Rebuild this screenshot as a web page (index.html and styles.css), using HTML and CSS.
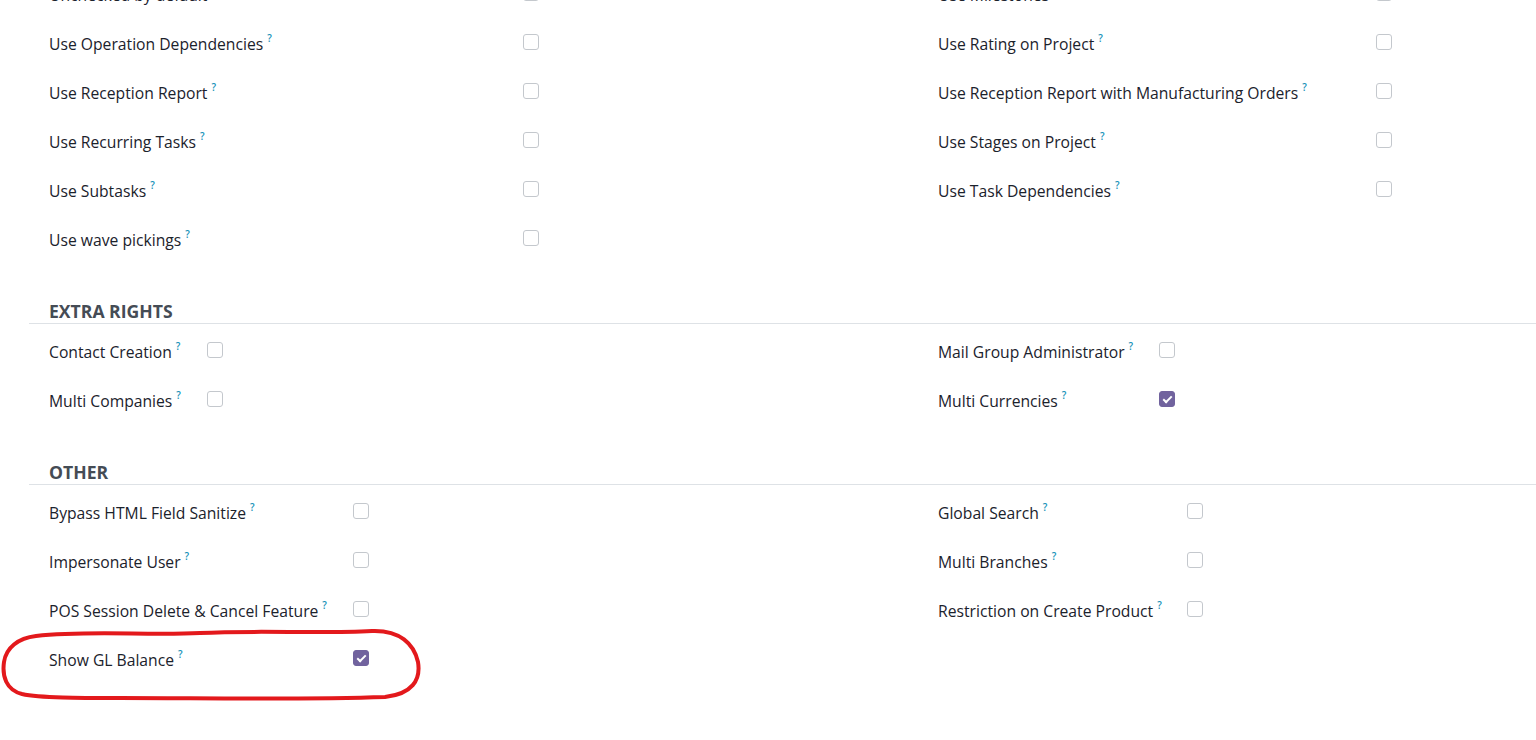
FILE: index.html
```html
<!DOCTYPE html>
<html>
<head>
<meta charset="utf-8">
<link rel="stylesheet" href="styles.css">
</head>
<body>
<div class="page">
  <div class="group-pair g1">
    <div class="col">
      <div class="row"><span class="lbl">Unchecked by default<sup>?</sup></span><span class="cb"></span></div>
      <div class="row"><span class="lbl">Use Operation Dependencies<sup>?</sup></span><span class="cb"></span></div>
      <div class="row"><span class="lbl">Use Reception Report<sup>?</sup></span><span class="cb"></span></div>
      <div class="row"><span class="lbl">Use Recurring Tasks<sup>?</sup></span><span class="cb"></span></div>
      <div class="row"><span class="lbl">Use Subtasks<sup>?</sup></span><span class="cb"></span></div>
      <div class="row"><span class="lbl">Use wave pickings<sup>?</sup></span><span class="cb"></span></div>
    </div>
    <div class="col">
      <div class="row"><span class="lbl">Use Milestones<sup>?</sup></span><span class="cb"></span></div>
      <div class="row"><span class="lbl">Use Rating on Project<sup>?</sup></span><span class="cb"></span></div>
      <div class="row"><span class="lbl">Use Reception Report with Manufacturing Orders<sup>?</sup></span><span class="cb"></span></div>
      <div class="row"><span class="lbl">Use Stages on Project<sup>?</sup></span><span class="cb"></span></div>
      <div class="row"><span class="lbl">Use Task Dependencies<sup>?</sup></span><span class="cb"></span></div>
    </div>
  </div>

  <div class="sep">EXTRA RIGHTS</div>
  <div class="group-pair g2">
    <div class="col">
      <div class="row"><span class="lbl">Contact Creation<sup>?</sup></span><span class="cb"></span></div>
      <div class="row"><span class="lbl">Multi Companies<sup>?</sup></span><span class="cb"></span></div>
    </div>
    <div class="col">
      <div class="row"><span class="lbl">Mail Group Administrator<sup>?</sup></span><span class="cb"></span></div>
      <div class="row"><span class="lbl">Multi Currencies<sup>?</sup></span><span class="cb checked"></span></div>
    </div>
  </div>

  <div class="sep">OTHER</div>
  <div class="group-pair g3">
    <div class="col">
      <div class="row"><span class="lbl">Bypass HTML Field Sanitize<sup>?</sup></span><span class="cb"></span></div>
      <div class="row"><span class="lbl">Impersonate User<sup>?</sup></span><span class="cb"></span></div>
      <div class="row"><span class="lbl">POS Session Delete &amp; Cancel Feature<sup>?</sup></span><span class="cb"></span></div>
      <div class="row"><span class="lbl">Show GL Balance<sup>?</sup></span><span class="cb checked"></span></div>
    </div>
    <div class="col">
      <div class="row"><span class="lbl">Global Search<sup>?</sup></span><span class="cb"></span></div>
      <div class="row"><span class="lbl">Multi Branches<sup>?</sup></span><span class="cb"></span></div>
      <div class="row"><span class="lbl">Restriction on Create Product<sup>?</sup></span><span class="cb"></span></div>
    </div>
  </div>
</div>
<svg class="annot" width="1536" height="740" viewBox="0 0 1536 740">
  <path d="M36 636 C 90 630, 150 636, 200 633 C 260 630, 320 634, 372 631 C 400 630, 414 644, 418 662 C 421 680, 412 694, 385 697 C 300 700, 200 698, 120 698 C 80 698, 40 698, 22 694 C 6 690, 2 676, 4 662 C 6 648, 18 638, 36 636 Z" fill="none" stroke="#e3191c" stroke-width="4" stroke-linecap="round" stroke-linejoin="round"/>
</svg>
</body>
</html>
```
FILE: styles.css
```css
html, body {
  margin: 0;
  padding: 0;
  background: #ffffff;
  overflow: hidden;
}
body {
  font-family: "Open Sans", "Noto Sans", sans-serif;
  color: #1b222c;
  width: 1536px;
  height: 740px;
  position: relative;
}
.page {
  margin-top: -30px;
  padding-left: 29px;
}
.group-pair {
  display: grid;
  grid-template-columns: 889px 889px;
}
.col {
  padding-left: 20px;
}
.row {
  display: grid;
  height: 49px;
  align-items: center;
}
.g1 .col:first-child .row { grid-template-columns: 474px 16px; }
.g1 .col:last-child .row { grid-template-columns: 438px 16px; }
.g2 .col:first-child .row { grid-template-columns: 158px 16px; }
.g2 .col:last-child .row { grid-template-columns: 221px 16px; }
.g3 .col:first-child .row { grid-template-columns: 304px 16px; }
.g3 .col:last-child .row { grid-template-columns: 249px 16px; }
.lbl {
  font-size: 15.7px;
  font-weight: 500;
  line-height: 20px;
  white-space: nowrap;
  color: #1b222c;
  margin-top: 2px;
}
.lbl sup {
  font-size: 10px;
  color: #1792b8;
  margin-left: 4px;
  vertical-align: 0;
  position: relative;
  top: -8px;
  font-weight: 600;
}
.cb {
  display: block;
  width: 14px;
  height: 14px;
  border: 1px solid #c4c8cd;
  border-radius: 3px;
  background: #fff;
  margin-top: -3px;
}
.cb.checked {
  background: #71639e;
  border-color: #71639e;
  position: relative;
}
.cb.checked::after {
  content: "";
  position: absolute;
  left: 5px;
  top: 2px;
  width: 3px;
  height: 7px;
  border: solid #fff;
  border-width: 0 2px 2px 0;
  transform: rotate(45deg);
}
.sep {
  margin-top: 35px;
  height: 24px;
  line-height: 24px;
  padding-left: 20px;
  border-bottom: 1px solid #dee2e6;
  font-size: 17.6px;
  font-weight: 700;
  color: #454c55;
  margin-bottom: 3px;
  width: 1600px;
}
.annot {
  position: absolute;
  left: 0;
  top: 0;
  pointer-events: none;
}
```
